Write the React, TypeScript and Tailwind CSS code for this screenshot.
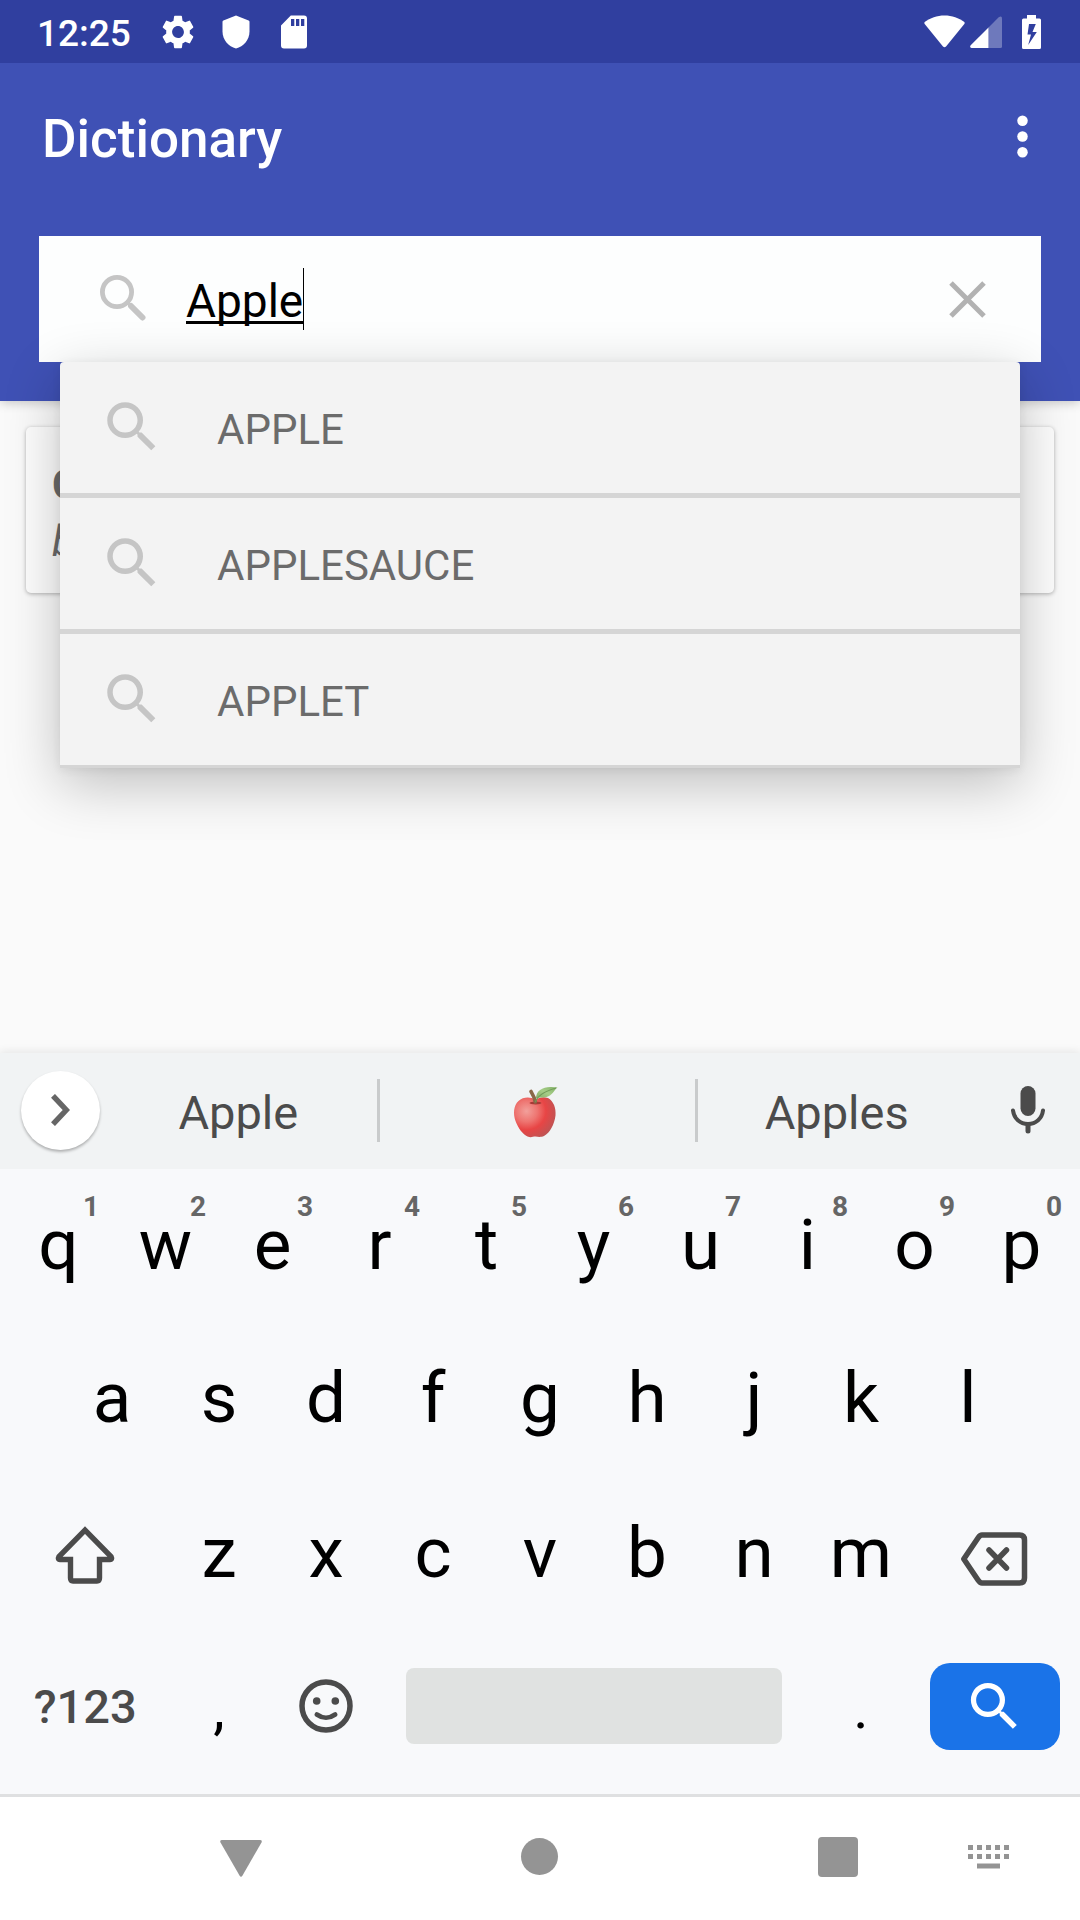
import React, { ReactNode, useState } from "react";
import { MdSearch } from "react-icons/md";

const suggestions = ["APPLE", "APPLESAUCE", "APPLET"];

const topRow: [string, string][] = [
  ["q", "1"], ["w", "2"], ["e", "3"], ["r", "4"], ["t", "5"],
  ["y", "6"], ["u", "7"], ["i", "8"], ["o", "9"], ["p", "0"],
];
const middleRow = ["a", "s", "d", "f", "g", "h", "j", "k", "l"];
const bottomRow = ["z", "x", "c", "v", "b", "n", "m"];

function StatusBar() {
  return (
    <div className="flex h-[63px] items-center justify-between bg-[#303f9f] pr-[39px] pl-[37px] text-white">
      <div className="flex items-center gap-[31px]">
        <span className="pt-[3px] text-[37px] leading-none font-medium">12:25</span>
        <div className="flex items-center gap-[28px]">
          <svg width="32" height="34" viewBox="2.25 2 19.5 20" preserveAspectRatio="none" fill="currentColor" aria-hidden="true">
            <path d="M19.14 12.94c.04-.3.06-.61.06-.94s-.02-.64-.07-.94l2.03-1.58a.49.49 0 0 0 .12-.61l-1.92-3.32a.49.49 0 0 0-.59-.22l-2.39.96c-.5-.38-1.03-.7-1.62-.94l-.36-2.54a.48.48 0 0 0-.48-.41h-3.84c-.24 0-.43.17-.47.41l-.36 2.54c-.59.24-1.13.57-1.62.94l-2.39-.96a.48.48 0 0 0-.59.22L2.74 8.87c-.12.21-.08.47.12.61l2.03 1.58c-.05.3-.09.63-.09.94s.02.64.07.94l-2.03 1.58a.49.49 0 0 0-.12.61l1.92 3.32c.12.22.37.29.59.22l2.39-.96c.5.38 1.03.7 1.62.94l.36 2.54c.05.24.24.41.48.41h3.84c.24 0 .44-.17.47-.41l.36-2.54c.59-.24 1.13-.56 1.62-.94l2.39.96c.22.08.47 0 .59-.22l1.92-3.32a.48.48 0 0 0-.12-.61l-2.01-1.58zM12 15.6A3.61 3.61 0 0 1 8.4 12c0-1.98 1.62-3.6 3.6-3.6s3.6 1.62 3.6 3.6-1.62 3.6-3.6 3.6z" />
          </svg>
          <svg width="28" height="34" viewBox="0 0 28 34" fill="currentColor" aria-hidden="true">
            <path d="M14 0.400 26.600 5.400Q27.500 5.800 27.500 6.800V16.500C27.500 25 21.500 31.500 14 33.600 6.500 31.500.5 25 .5 16.500V6.800Q.5 5.800 1.400 5.400Z" />
          </svg>
          <svg className="ml-[3px]" width="26" height="34" viewBox="0 0 26 34" fill="currentColor" aria-hidden="true">
            <path fillRule="evenodd" d="M9.800.5H23A3 3 0 0 1 26 3.500V30.500A3 3 0 0 1 23 33.500H3A3 3 0 0 1 0 30.500V10.500Zm.2 3.500v7h3.300V4Zm5 0v7h3.300V4Zm5 0v7h3.300V4Z" />
          </svg>
        </div>
      </div>
      <div className="flex items-center">
        <svg width="41" height="34" viewBox="0 0 41 34" fill="currentColor" aria-hidden="true">
          <path d="M20.500.5C28 .5 35 3 40 6.800Q41.200 7.800 40.300 9L22 31.500Q20.500 33 19 31.500L.7 9Q-.2 7.800 1 6.800C6 3 13 .5 20.500.5Z" />
        </svg>
        <svg className="ml-[5px]" width="32" height="34" viewBox="0 0 32 34" fill="currentColor" aria-hidden="true">
          <path opacity=".3" d="M28.700 2.200Q32 .3 32 3.400V31.500Q32 33 30.500 33H18.500V12.500Z" />
          <path d="M18.500 12.500V33H1.500Q-.8 32.200.7 30.300Z" />
        </svg>
        <svg className="ml-5" width="19" height="34" viewBox="0 0 19 34" fill="currentColor" aria-hidden="true">
          <path fillRule="evenodd" d="M5 0H14V3.500H17.500Q19 3.500 19 5V32.500Q19 34 17.500 34H1.500Q0 34 0 32.500V5Q0 3.500 1.500 3.500H5ZM7 9 5.500 19.500H9L6.200 30 14.800 17H10.500L13.800 9Z" />
        </svg>
      </div>
    </div>
  );
}

function SearchBox() {
  const [query, setQuery] = useState("Apple");
  return (
    <div className="relative mx-[39px]">
      <div className="flex h-[126px] items-center bg-[#fdfefe] pr-[49px] pl-[61px]">
        <svg className="mb-[3px] shrink-0" width="46" height="46" viewBox="0 0 46 46" fill="none" stroke="#c5c5c5" aria-hidden="true">
          <circle cx="17" cy="17" r="14.600" strokeWidth="4.800" />
          <path d="M31 31 42.500 42.500" strokeWidth="6" strokeLinecap="round" />
          <path d="M28 28 32 32" strokeWidth="3" />
        </svg>
        <div className="ml-10 flex h-[62px] flex-1 items-center">
          <input
            aria-label="Search the dictionary"
            value={query}
            onChange={(e) => setQuery(e.target.value)}
            className="field-sizing-content h-[62px] pt-1 text-[46px] text-black underline decoration-[3px] underline-offset-[4px] outline-none [text-decoration-skip-ink:none]"
          />
          <span className="h-[62px] w-px bg-black" />
        </div>
        <button type="button" aria-label="Clear" onClick={() => setQuery("")} className="p-[6px]">
          <svg width="37" height="37" viewBox="0 0 37 37" stroke="#b2b2b2" strokeWidth="5" aria-hidden="true">
            <path d="M2 2 35 35M35 2 2 35" />
          </svg>
        </button>
      </div>
      <ul className="absolute inset-x-[21px] top-full z-10 rounded-t bg-[#f3f3f3] shadow-[0_16px_56px_rgba(0,0,0,0.24),0_2px_10px_rgba(0,0,0,0.07)]">
        {suggestions.map((word) => (
          <li key={word} className="border-b-[5px] border-[#d5d5d5] last:border-b-[3px]">
            <button type="button" className="flex h-[131px] w-full items-center pl-[39px] text-left">
              <MdSearch className="mb-px size-[66px] text-[#c5c5c5]" aria-hidden="true" />
              <span className="ml-[52px] pt-1 text-[42px] leading-none text-[#6b6b6b]">{word}</span>
            </button>
          </li>
        ))}
      </ul>
    </div>
  );
}

function Apple() {
  return (
    <svg width="46" height="54" viewBox="0 0 46 54" role="img" aria-label="Red apple">
      <defs>
        <radialGradient id="skin" cx="0.300" cy="0.350" r="0.750">
          <stop offset="0" stopColor="#f2a09b" />
          <stop offset="0.350" stopColor="#ee7571" />
          <stop offset="0.620" stopColor="#e84545" />
          <stop offset="1" stopColor="#bd5454" />
        </radialGradient>
        <linearGradient id="leaf" x1="0" y1="1" x2="1" y2="0">
          <stop offset="0" stopColor="#84ac66" />
          <stop offset="0.500" stopColor="#a6cd88" />
          <stop offset="1" stopColor="#7fae62" />
        </linearGradient>
      </defs>
      <path fill="url(#skin)" d="M22.500 14.500C17 11.500 10 11.800 5.500 16 .5 20.500 0 29 2.500 36 5 43 10 49.500 14.500 51.500 18 53 20 51.500 22.500 51.600 25 51.700 27.500 52.500 31 51 37 48 41.500 39 42.500 30.500 43.200 23 40.500 16 35 13 30.500 11.200 26 12.500 22.500 14.500Z" />
      <ellipse cx="22.500" cy="18" rx="6" ry="1.500" fill="#a83a36" />
      <path fill="none" stroke="#8a6849" strokeWidth="3.600" strokeLinecap="round" d="M18 6.500C19.500 9 21.500 12 22.300 17" />
      <path fill="url(#leaf)" d="M23 13.500C23 4 32 .3 44.500 2.500 41 5 39.500 10.500 33.500 12 29.500 13 26 12 23 13.500Z" />
      <path fill="none" stroke="#719b58" strokeWidth="1.200" d="M22.500 17C24 11.500 31 6.500 43 3" />
    </svg>
  );
}

function SuggestionStrip() {
  return (
    <div className="flex h-[116px] items-center bg-[#f1f3f4] pb-[2px] text-[47px] leading-none text-[#4b4b4b] shadow-[0_-2px_8px_rgba(0,0,0,0.08)]">
      <button type="button" aria-label="More tools" className="ml-[21px] flex size-[79px] items-center justify-center rounded-full bg-white shadow-[0_2px_3px_rgba(0,0,0,0.28)]">
        <svg width="20" height="32" viewBox="0 0 20 32" fill="none" stroke="#666" strokeWidth="5.400" aria-hidden="true">
          <path d="M2 1.800 15.300 16 2 30.200" />
        </svg>
      </button>
      <div className="flex h-[63px] flex-1 items-center">
        <button type="button" className="h-full flex-[23] pt-1">Apple</button>
        <button type="button" className="flex h-full flex-[26] items-center justify-center border-x-[3px] border-[#c9cbcc] pt-1 pr-[3px]">
          <Apple />
        </button>
        <button type="button" className="h-full flex-[23] pt-1">Apples</button>
      </div>
      <button type="button" aria-label="Voice input" className="flex w-[105px] justify-center">
        <svg width="36" height="48" viewBox="0 0 36 48" fill="none" stroke="#4b4b4b" strokeLinecap="round" aria-hidden="true">
          <rect x="10.500" y="0" width="15" height="30" rx="7.500" fill="#4b4b4b" stroke="none" />
          <path strokeWidth="4" d="M3 24.500C4 32.500 10 38 18 38S32 32.500 33 24.500" />
          <path strokeWidth="5" d="M18 39V45" />
        </svg>
      </button>
    </div>
  );
}

function Key({ children, label, className = "flex-[2]" }: { children?: ReactNode; label?: string; className?: string }) {
  return (
    <button type="button" aria-label={label} className={`relative flex h-full min-w-0 items-center justify-center ${className}`}>
      {children}
    </button>
  );
}

function Keyboard() {
  return (
    <div className="bg-[#f8f9fb] px-[5px] pb-[12px] text-[71px] leading-none text-black">
      <div className="flex h-[151px]">
        {topRow.map(([letter, digit]) => (
          <Key key={letter}>
            {letter}
            <span className="absolute top-6 right-[13px] text-[28px] leading-none font-bold text-[#666]">{digit}</span>
          </Key>
        ))}
      </div>
      <div className="flex h-[155px]">
        <span className="flex-1" />
        {middleRow.map((letter) => <Key key={letter}>{letter}</Key>)}
        <span className="flex-1" />
      </div>
      <div className="flex h-[155px]">
        <Key label="Shift" className="flex-[3] pt-1">
          <svg width="60" height="60" viewBox="0 0 60 60" fill="none" stroke="#4b4b4b" strokeWidth="5.400" aria-hidden="true">
            <path strokeLinejoin="miter" d="M30 5.200 4 31.500Q2.500 34.500 5 34.500H15.500V53Q15.500 56 18 56H42Q44.500 56 44.500 53V34.500H55Q57.500 34.500 56 31.500Z" />
          </svg>
        </Key>
        {bottomRow.map((letter) => <Key key={letter}>{letter}</Key>)}
        <Key label="Backspace" className="flex-[3] pt-3">
          <svg width="67" height="54" viewBox="0 0 67 54" fill="none" stroke="#4b4b4b" strokeWidth="5.500" strokeLinejoin="round" strokeLinecap="round" aria-hidden="true">
            <path d="M2.800 27 17 6Q19 3 21 3H58.500Q63.500 3 63.500 8V46Q63.500 51 58.500 51H21Q19 51 17 48Z" />
            <path d="M28 18 45.500 36M45.500 18 28 36" />
          </svg>
        </Key>
      </div>
      <div className="flex h-[152px]">
        <Key className="flex-[3] text-[47px] font-medium text-[#4b4b4b]">?123</Key>
        <Key><span className="pt-1 text-[58px]">,</span></Key>
        <Key label="Emoji">
          <svg width="54" height="54" viewBox="0 0 54 54" fill="none" stroke="#4b4b4b" aria-hidden="true">
            <circle cx="27" cy="27" r="24" strokeWidth="5.500" />
            <circle cx="17.700" cy="22" r="3.800" fill="#4b4b4b" stroke="none" />
            <circle cx="36.300" cy="22" r="3.800" fill="#4b4b4b" stroke="none" />
            <path strokeWidth="4.600" strokeLinecap="round" d="M17.800 35.500Q27 42 36.200 35.500" />
          </svg>
        </Key>
        <Key label="Space" className="flex-[8]">
          <span className="mx-[26px] h-[76px] flex-1 rounded-lg bg-[#e0e2e1]" />
        </Key>
        <Key><span className="pt-1 text-[58px]">.</span></Key>
        <Key label="Search" className="flex-[3]">
          <span className="mx-[15px] flex h-[87px] flex-1 items-center justify-center rounded-[20px] bg-[#1a73e8]">
            <MdSearch className="size-[63px] text-white" aria-hidden="true" />
          </span>
        </Key>
      </div>
    </div>
  );
}

function NavButton({ label, children }: { label: string; children: ReactNode }) {
  return (
    <button type="button" aria-label={label} className="flex h-full w-[150px] items-center justify-center">
      {children}
    </button>
  );
}

function NavigationBar() {
  return (
    <nav className="flex h-[126px] items-center border-t-[3px] border-[#dfe0e1] bg-white pr-[17px] pb-1 pl-[166px]">
      <NavButton label="Back">
        <svg width="42" height="40" viewBox="0 0 42 40" fill="#949494" aria-hidden="true">
          <path d="M2 3H40Q42.500 3 41.500 5.500L22.500 38.500Q21 41 19.500 38.500L.5 5.500Q-.5 3 2 3Z" />
        </svg>
      </NavButton>
      <span className="flex-1" />
      <NavButton label="Home">
        <span className="size-[37px] rounded-full bg-[#949494]" />
      </NavButton>
      <span className="flex-1" />
      <NavButton label="Recent apps">
        <span className="size-10 rounded bg-[#949494]" />
      </NavButton>
      <NavButton label="Switch keyboard">
        <svg width="41" height="24" viewBox="0 0 41 24" fill="#949494" aria-hidden="true">
          {[0, 9, 18, 27, 36].map((x) => (
            <path key={x} d={`M${x} 0h5v5h-5zM${x} 9h5v5h-5z`} />
          ))}
          <path d="M9 18.500H32V23.500H9Z" />
        </svg>
      </NavButton>
    </nav>
  );
}

export default function App() {
  return (
    <div className="flex min-h-screen flex-col bg-[#fafafa] font-[Roboto,sans-serif]">
      <header className="relative z-10 bg-[#3f51b5] pb-[39px] shadow-[0_2px_10px_rgba(0,0,0,0.2)]">
        <StatusBar />
        <div className="mb-[26px] flex h-[147px] items-center justify-between pr-[26px] pl-[42px] text-white">
          <h1 className="pt-[6px] text-[53px] leading-none font-medium">Dictionary</h1>
          <button type="button" aria-label="More options">
            <svg width="63" height="63" viewBox="0 0 24 24" fill="currentColor" aria-hidden="true">
              <circle cx="12" cy="6" r="2" />
              <circle cx="12" cy="12" r="2" />
              <circle cx="12" cy="18" r="2" />
            </svg>
          </button>
        </div>
        <SearchBox />
      </header>
      <main className="flex-1 px-[26px] pt-[26px]">
        <article className="h-[166px] rounded-[5px] bg-[#fdfdfd] px-[26px] pt-[29px] text-[42px] leading-[57px] text-[#6b6b6b] shadow-[0_1px_4px_rgba(0,0,0,0.3)]">
          <h2 className="font-bold">C</h2>
          <p className="italic">b</p>
        </article>
      </main>
      <SuggestionStrip />
      <Keyboard />
      <NavigationBar />
    </div>
  );
}
